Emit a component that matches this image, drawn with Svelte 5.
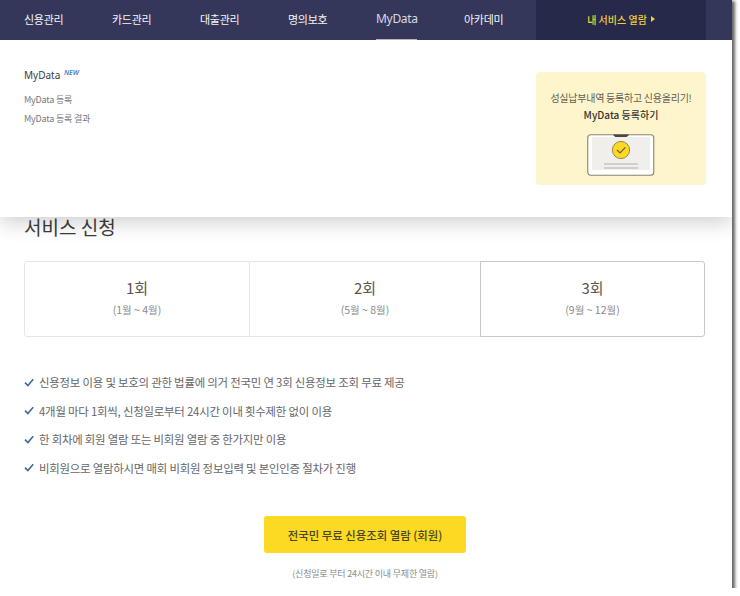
<script>
  const navItems = ["신용관리", "카드관리", "대출관리", "명의보호", "MyData", "아카데미"];
  const rounds = [
    { name: "1회", months: "(1월 ~ 4월)" },
    { name: "2회", months: "(5월 ~ 8월)" },
    { name: "3회", months: "(9월 ~ 12월)", active: true },
  ];
  const notes = [
    "신용정보 이용 및 보호의 관한 법률에 의거 전국민 연 3회 신용정보 조회 무료 제공",
    "4개월 마다 1회씩, 신청일로부터 24시간 이내 횟수제한 없이 이용",
    "한 회차에 회원 열람 또는 비회원 열람 중 한가지만 이용",
    "비회원으로 열람하시면 매회 비회원 정보입력 및 본인인증 절차가 진행",
  ];
</script>

<div class="page">
  <header class="top">
    <nav class="gnb">
      {#each navItems as item}
        <a class="gnb-item" class:on={item === "MyData"} href="#top">{item}</a>
      {/each}
    </nav>
    <a class="my-service" href="#top">내 서비스 열람 <span class="arrow"></span></a>
  </header>

  <div class="mega">
    <div class="mega-links">
      <div class="mega-title">MyData <em>NEW</em></div>
      <a href="#top">MyData 등록</a>
      <a href="#top">MyData 등록 결과</a>
    </div>
    <div class="promo">
      <p>성실납부내역 등록하고 신용올리기!</p>
      <strong>MyData 등록하기</strong>
      <svg width="68" height="44" viewBox="0 0 68 44">
        <rect x="0.75" y="1.75" width="66" height="40.5" rx="3" fill="#fff" stroke="#8a8470" stroke-width="1.1" />
        <rect x="5" y="4" width="58" height="33" fill="#f0efec" />
        <path d="M26 1.5h16c-1 2-2 2.5-4 2.5h-8c-2 0-3-.5-4-2.5z" fill="#4a4738" />
        <circle cx="34" cy="17" r="8.6" fill="#fcd922" stroke="#9a8a44" stroke-width="1" />
        <path d="M30 17l3 3 5.4-5.6" fill="none" stroke="#6d6030" stroke-width="1.2" />
        <path d="M17 31h34M17 35h34" stroke="#b0afab" stroke-width="1" />
      </svg>
    </div>
  </div>

  <main class="content">
    <h2>서비스 신청</h2>

    <div class="rounds">
      {#each rounds as round}
        <div class="round" class:active={round.active}>
          <b>{round.name}</b>
          <span>{round.months}</span>
        </div>
      {/each}
    </div>

    <ul class="notes">
      {#each notes as note}
        <li>
          <svg width="10" height="9" viewBox="0 0 10 9">
            <path d="M1 4.6l2.9 3L9.2 1.2" fill="none" stroke="#3c6aa0" stroke-width="1.6" />
          </svg>
          {note}
        </li>
      {/each}
    </ul>

    <div class="actions">
      <button type="button">전국민 무료 신용조회 열람 (회원)</button>
      <small>(신청일로 부터 24시간 이내 무제한 열람)</small>
    </div>
  </main>
</div>

<style>
  :global(body) {
    background: #fff;
  }

  .page {
    position: relative;
    width: 732px;
    height: 588px;
    background: #fff;
    overflow: hidden;
    font-family: "Noto Sans CJK KR", "Noto Sans", sans-serif;
    box-shadow: 2px 2px 3px 1px #666;
  }

  .top {
    position: relative;
    z-index: 3;
    display: flex;
    height: 40px;
    padding-left: 24px;
    background: #34375a;
  }

  .gnb {
    display: flex;
    gap: 47px;
    width: 512px;
  }

  .gnb-item {
    display: flex;
    align-items: center;
    width: 41px;
    height: 40px;
    padding-bottom: 2px;
    box-sizing: border-box;
    color: #f6f6f8;
    font-size: 11px;
    letter-spacing: -0.3px;
    white-space: nowrap;
    text-decoration: none;
  }

  .gnb-item.on {
    color: #d9dae3;
    font-family: "Noto Sans", sans-serif;
    font-size: 12px;
    border-bottom: 1px solid #b4b5c4;
  }

  .my-service {
    display: flex;
    align-items: center;
    justify-content: center;
    gap: 4px;
    width: 170px;
    height: 40px;
    padding-bottom: 2px;
    box-sizing: border-box;
    background: #27294a;
    color: #f3cf3c;
    font-size: 10px;
    font-weight: 500;
    text-decoration: none;
  }

  .arrow {
    width: 0;
    height: 0;
    border-left: 4px solid #f3cf3c;
    border-top: 3px solid transparent;
    border-bottom: 3px solid transparent;
  }

  .mega {
    position: absolute;
    top: 40px;
    left: 0;
    z-index: 2;
    display: flex;
    justify-content: space-between;
    width: 100%;
    height: 177px;
    padding: 29px 26px 0 24px;
    box-sizing: border-box;
    background: #fff;
    box-shadow: 0 5px 20px rgba(0, 0, 0, 0.2);
  }

  .mega-links {
    display: flex;
    flex-direction: column;
    align-items: flex-start;
  }

  .mega-title {
    margin-bottom: 11px;
    color: #3a3a3a;
    font-family: "Noto Sans", sans-serif;
    font-size: 10px;
    line-height: 12px;
  }

  .mega-title em {
    position: relative;
    top: -4px;
    margin-left: 1px;
    color: #4a7fc4;
    font-size: 7px;
    font-weight: 600;
  }

  .mega-links a {
    margin-bottom: 7px;
    color: #77777a;
    font-size: 9px;
    line-height: 12px;
    letter-spacing: -0.2px;
    text-decoration: none;
  }

  .promo {
    display: flex;
    flex-direction: column;
    align-items: center;
    align-self: flex-start;
    width: 170px;
    height: 113px;
    margin-top: 3px;
    padding-top: 19px;
    box-sizing: border-box;
    background: #fff5cc;
    border-radius: 4px;
  }

  .promo p {
    margin: 0 0 3px;
    color: #5f5c50;
    font-size: 10px;
    line-height: 14px;
    letter-spacing: -0.25px;
    white-space: nowrap;
  }

  .promo strong {
    margin-bottom: 11px;
    color: #33322c;
    font-size: 10px;
    line-height: 14px;
    font-weight: 500;
  }

  .content {
    padding: 173px 27px 0 24px;
  }

  h2 {
    margin: 0 0 20px;
    color: #3c3c3c;
    font-size: 19px;
    line-height: 28px;
    font-weight: 400;
  }

  .rounds {
    display: grid;
    grid-template-columns: 226px 231px 224px;
    height: 76px;
    margin-bottom: 31px;
  }

  .round {
    display: flex;
    flex-direction: column;
    align-items: center;
    padding-top: 16px;
    box-sizing: border-box;
    border: 1px solid #e6e6e6;
    border-left: 0;
    color: #555;
  }

  .round:first-child {
    border-left: 1px solid #e6e6e6;
    border-radius: 3px 0 0 3px;
  }

  .round.active {
    border: 1px solid #c8c8c8;
    border-radius: 0 3px 3px 0;
    margin-left: -1px;
  }

  .round b {
    font-size: 15px;
    line-height: 20px;
    font-weight: 400;
    color: #5a5550;
  }

  .round span {
    margin-top: 5px;
    color: #8a8a8a;
    font-size: 10.5px;
    line-height: 14px;
  }

  .notes {
    margin: 0;
    padding: 0;
    list-style: none;
  }

  .notes li {
    display: flex;
    align-items: center;
    gap: 5px;
    height: 28.5px;
    color: #66666a;
    font-size: 11.4px;
    letter-spacing: -0.2px;
  }

  .actions {
    display: flex;
    flex-direction: column;
    align-items: center;
    margin-top: 34px;
    margin-right: -1px;
  }

  button {
    width: 202px;
    height: 37px;
    border: 0;
    border-radius: 3px;
    background: #fcd922;
    color: #4a4526;
    font-family: inherit;
    font-size: 11.4px;
    font-weight: 500;
  }

  small {
    margin-top: 14px;
    color: #8c8c8c;
    font-size: 9px;
    line-height: 14px;
    letter-spacing: -0.2px;
  }
</style>
